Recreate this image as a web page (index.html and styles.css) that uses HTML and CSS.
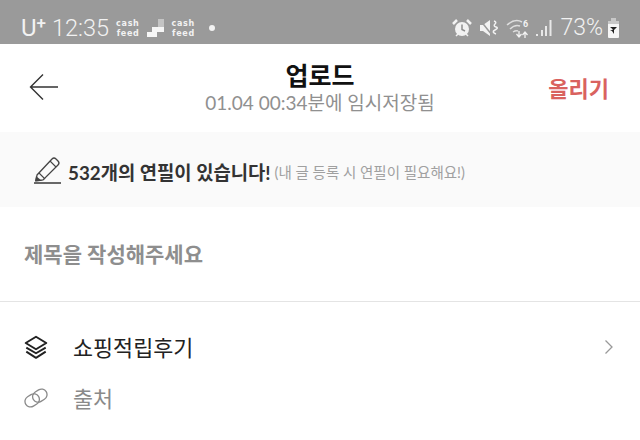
FILE: index.html
```html
<!DOCTYPE html>
<html lang="ko">
<head>
  <meta charset="UTF-8" />
  <title>업로드</title>
  <link rel="stylesheet" href="styles.css">
</head>
<body>

  <!-- status bar -->
  <div class="status-bar">
    <div class="status-left">
      <span class="carrier">U<sup>+</sup></span>
      <span class="clock">12:35</span>
      <span class="cash">cash<br>feed</span>
      <svg class="stairs" width="18" height="18" viewBox="0 0 18 18">
        <path d="M11 0h6v8h-6z" fill="#c4c4c4"/>
        <path d="M5 8h12v5h-7v5H0v-5h5z" fill="#f6f6f6"/>
      </svg>
      <span class="cash">cash<br>feed</span>
      <span class="dot"></span>
    </div>
    <div class="status-right">
      <svg width="20" height="20" viewBox="0 0 20 20">
        <circle cx="10" cy="11" r="7" fill="#f2f2f2"/>
        <path d="M10 6.500v5l3 1.500" fill="none" stroke="#8f8f8f" stroke-width="1.500"/>
        <path d="M1 6l4-4M19 6l-4-4" stroke="#f2f2f2" stroke-width="2.500"/>
        <path d="M4 18l2-2M16 18l-2-2" stroke="#f2f2f2" stroke-width="1.500"/>
      </svg>
      <svg width="20" height="20" viewBox="0 0 20 20">
        <path d="M1 7h3l7-5v16l-7-5H1z" fill="#f2f2f2"/>
        <path d="M1 2l12 15" stroke="#9a9a9a" stroke-width="1.500"/>
        <path d="M15 3q3 1 1 3t1 3-1 3 1 4" fill="none" stroke="#f2f2f2" stroke-width="1.500"/>
      </svg>
      <svg width="24" height="22" viewBox="0 0 24 22">
        <path d="M1 8q8-7 15-3M4 12q5-5 10-3M7 15q3-2 5-1" fill="none" stroke="#dedede" stroke-width="1.500"/>
        <path d="M13 14v6M10.500 17l2.500 3 2.500-3M19 21v-6M16.500 18l2.500-3 2.500 3" fill="none" stroke="#f2f2f2" stroke-width="1.300"/>
        <text x="17" y="10" class="wifi-six">6</text>
      </svg>
      <svg class="signal" width="17" height="18" viewBox="0 0 17 18">
        <path d="M1 15h2v2H1zM6 11h2v6H6zM10 7h2v10h-2zM14.500 1h2v16h-2z" fill="#e8e8e8"/>
      </svg>
      <span class="percent">73%</span>
      <svg width="13" height="20" viewBox="0 0 13 20">
        <path d="M4 0h5v3H4z" fill="#c8c8c8"/>
        <path d="M1 3h11v3H1z" fill="#c8c8c8"/>
        <path d="M1 6h11v13a1 1 0 0 1-1 1H2a1 1 0 0 1-1-1z" fill="#f6f6f6"/>
        <path d="M3 9h7l-3 3v4l-2-3H3l3-1.500z" fill="#222"/>
      </svg>
    </div>
  </div>

  <!-- header -->
  <div class="header">
    <svg class="back" width="30" height="28" viewBox="0 0 30 28">
      <path d="M14 1.500L1.500 14 14 26.500M1.500 14H29" fill="none" stroke="#333" stroke-width="1.400"/>
    </svg>
    <div class="header-title">
      <h1>업로드</h1>
      <p>01.04 00:34분에 임시저장됨</p>
    </div>
    <span class="submit">올리기</span>
  </div>

  <!-- pencil count -->
  <div class="pencil-banner">
    <svg width="30" height="30" viewBox="0 0 30 30">
      <path d="M5 20L20 4q2-2 4 0l2 2q2 2 0 4L11 25l-7 1z" fill="none" stroke="#444" stroke-width="1.300"/>
      <path d="M18 6l6 6M7 18l6 6" fill="none" stroke="#444" stroke-width="1.100"/>
      <path d="M4 21l6 5H3z" fill="#444"/>
      <path d="M2 28h27" stroke="#444" stroke-width="1.600"/>
    </svg>
    <strong>532개의 연필이 있습니다!</strong>
    <span>(내 글 등록 시 연필이 필요해요!)</span>
  </div>

  <div class="title-input">제목을 작성해주세요</div>

  <div class="menu">
    <div class="menu-row">
      <svg width="24" height="24" viewBox="1.500 1.500 21 21">
        <path d="M12 3l9 5.500-9 5.500-9-5.500z" fill="none" stroke="#222" stroke-width="1.700" stroke-linejoin="round"/>
        <path d="M3.500 12.500l8.500 5 8.500-5M3.500 16l8.500 5.500 8.500-5.500" fill="none" stroke="#222" stroke-width="1.700" stroke-linejoin="round"/>
      </svg>
      <span class="menu-label">쇼핑적립후기</span>
      <svg class="chevron" width="10" height="16" viewBox="0 0 10 16">
        <path d="M1.500 1.500L8 8l-6.500 6.500" fill="none" stroke="#999" stroke-width="1.300"/>
      </svg>
    </div>
    <div class="menu-row source">
      <svg width="24" height="24" viewBox="0 0 24 24">
        <g fill="none" stroke="#8a8a8a" stroke-width="1.300" transform="rotate(-32 12 12)">
          <rect x="0" y="6.500" width="15" height="11" rx="5.500"/>
          <rect x="9" y="6.500" width="15" height="11" rx="5.500"/>
        </g>
      </svg>
      <span class="menu-label">출처</span>
    </div>
  </div>

</body>
</html>
```

FILE: styles.css
```css
body {
  margin: 0;
  width: 640px;
  height: 440px;
  overflow: hidden;
  background: #fff;
  font-family: Lato, "Noto Sans CJK KR", sans-serif;
}

/* status bar */
.status-bar {
  height: 44px;
  box-sizing: border-box;
  background: #9a9a9a;
  color: #f2f2f2;
  display: flex;
  justify-content: space-between;
  align-items: center;
  padding: 11px 20px 0 21px;
  font-family: Roboto, sans-serif;
}

.status-left,
.status-right {
  display: flex;
  align-items: center;
}

.status-right {
  gap: 7px;
}

.carrier {
  font-size: 24px;
  font-weight: 400;
  margin-right: 6px;
}

.carrier sup {
  font-size: 17px;
  line-height: 0;
  vertical-align: 7px;
  font-weight: 500;
}

.clock {
  font-size: 23.500px;
  font-weight: 300;
  margin-right: 7px;
}

.cash {
  font-family: "DejaVu Sans", sans-serif;
  font-size: 8px;
  font-weight: 700;
  letter-spacing: 0.700px;
  line-height: 9.500px;
  text-align: right;
  margin-top: 2px;
}

.stairs {
  margin: 0 7px;
}

.dot {
  width: 6px;
  height: 6px;
  border-radius: 50%;
  background: #f2f2f2;
  margin-left: 14px;
}

.wifi-six {
  font-size: 9px;
  font-weight: 700;
  fill: #f2f2f2;
}

.signal {
  margin-left: -2px;
}

.percent {
  font-size: 23px;
  font-weight: 300;
  margin-left: 1px;
  margin-right: -3px;
}

/* header */
.header {
  height: 88px;
  box-sizing: border-box;
  display: grid;
  grid-template-columns: 1fr auto 1fr;
  align-items: center;
  padding: 0 31px 2px 31px;
}

.back {
  margin-left: -2px;
}

.header-title {
  text-align: center;
}

.header-title h1 {
  margin: 0;
  font-size: 25px;
  font-weight: 700;
  line-height: 32px;
  color: #111;
}

.header-title p {
  margin: 0;
  font-size: 19px;
  line-height: 24px;
  color: #909090;
}

.submit {
  font-size: 22px;
  font-weight: 700;
  color: #d9625f;
  justify-self: end;
}

/* banner */
.pencil-banner {
  height: 75px;
  box-sizing: border-box;
  background: #fafafa;
  display: flex;
  align-items: center;
  padding: 0 0 0 32px;
  color: #333;
}

.pencil-banner strong {
  font-size: 18.800px;
  margin-left: 6px;
  padding-top: 3px;
}

.pencil-banner span {
  font-size: 14.500px;
  color: #a0a0a0;
  margin-left: 4px;
  padding-top: 3px;
}

.title-input {
  height: 95px;
  box-sizing: border-box;
  border-bottom: 1px solid #e4e4e4;
  display: flex;
  align-items: center;
  padding: 0 0 2px 24px;
  font-size: 21px;
  font-weight: 700;
  color: #8e8e8e;
}

/* menu */
.menu {
  padding-top: 19px;
}

.menu-row {
  height: 51px;
  display: flex;
  align-items: center;
  padding: 0 26px 0 24px;
  color: #222;
}

.menu-label {
  font-size: 21.800px;
  margin-left: 25px;
  flex: 1;
}

.source {
  color: #8a8a8a;
}
```
